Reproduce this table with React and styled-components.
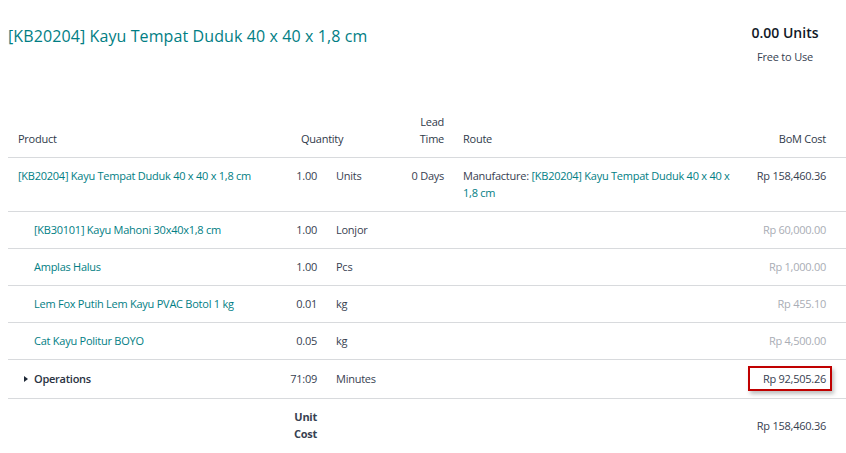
import React from 'react';
import styled, { createGlobalStyle } from 'styled-components';

const GlobalStyle = createGlobalStyle`
  body {
    margin: 0;
    background: #fff;
    font-family: "Open Sans", "Noto Sans", sans-serif;
    color: #374151;
  }
`;

const Page = styled.div`
  width: 846px;
  height: 453px;
  overflow: hidden;
  padding-left: 8px;
  box-sizing: border-box;
`;

const Header = styled.div`
  display: flex;
  justify-content: space-between;
  align-items: flex-start;
  padding-top: 22px;
  height: 103px;
  box-sizing: border-box;
`;

const Title = styled.h1`
  margin: 2px 0 0;
  font-size: 16px;
  letter-spacing: 0.1px;
  line-height: 24px;
  font-weight: 500;
  color: #017e84;
`;

const Stock = styled.div`
  width: 90px;
  margin-right: 16px;
  text-align: center;
`;

const StockValue = styled.div`
  font-size: 14px;
  font-weight: 600;
  line-height: 22px;
  color: #111827;
`;

const StockLabel = styled.div`
  margin-top: 4px;
  font-size: 11px;
  letter-spacing: -0.2px;
  line-height: 17px;
  color: #374151;
`;

const Table = styled.table`
  width: 838px;
  table-layout: fixed;
  border-collapse: collapse;
  font-size: 11px;
  letter-spacing: -0.25px;
  line-height: 17px;
`;

const Th = styled.th`
  font-weight: 500;
  text-align: ${p => p.$align || 'left'};
  vertical-align: bottom;
  padding: 10px ${p => p.$pr || 0}px 10px ${p => p.$pl || 0}px;
  border-bottom: 1px solid #d8dadd;
  color: #2f3a4a;
`;

const Td = styled.td`
  text-align: ${p => p.$align || 'left'};
  vertical-align: ${p => (p.$middle ? 'middle' : 'top')};
  padding: ${p => (p.$roomy ? '10px' : '9px')} ${p => p.$pr || 0}px
    ${p => (p.$roomy ? '11px' : '10px')} ${p => p.$pl || 0}px;
  border-bottom: ${p => (p.$last ? 'none' : '1px solid #d8dadd')};
  color: ${p => (p.$muted ? '#a9adb5' : '#374151')};
  font-weight: ${p => (p.$bold ? 700 : 400)};
`;

const Link = styled.span`
  color: #017e84;
`;

const OpsLabel = styled.span`
  font-weight: 600;
  color: #2a3342;
`;

const Caret = styled.span`
  display: inline-block;
  width: 0;
  height: 0;
  margin-right: 6px;
  vertical-align: 1px;
  border-top: 3.5px solid transparent;
  border-bottom: 3.5px solid transparent;
  border-left: 4px solid #1f2937;
`;

const Highlight = styled.span`
  position: relative;
  display: inline-block;
  &::after {
    content: '';
    position: absolute;
    left: -15px;
    right: -6px;
    top: -4px;
    bottom: -4px;
    border: 2px solid #c00000;
    box-shadow: 2px 3px 4px rgba(0, 0, 0, 0.25);
  }
`;

const components = [
  { name: '[KB30101] Kayu Mahoni 30x40x1,8 cm', qty: '1.00', uom: 'Lonjor', cost: 'Rp 60,000.00' },
  { name: 'Amplas Halus', qty: '1.00', uom: 'Pcs', cost: 'Rp 1,000.00' },
  { name: 'Lem Fox Putih Lem Kayu PVAC Botol 1 kg', qty: '0.01', uom: 'kg', cost: 'Rp 455.10' },
  { name: 'Cat Kayu Politur BOYO', qty: '0.05', uom: 'kg', cost: 'Rp 4,500.00' },
];

export default function App() {
  return (
    <Page>
      <GlobalStyle />
      <Header>
        <Title>[KB20204] Kayu Tempat Duduk 40 x 40 x 1,8 cm</Title>
        <Stock>
          <StockValue>0.00 Units</StockValue>
          <StockLabel>Free to Use</StockLabel>
        </Stock>
      </Header>
      <Table>
        <colgroup>
          <col style={{ width: 272 }} />
          <col style={{ width: 45 }} />
          <col style={{ width: 70 }} />
          <col style={{ width: 57 }} />
          <col style={{ width: 288 }} />
          <col style={{ width: 106 }} />
        </colgroup>
        <thead>
          <tr>
            <Th $pl={10}>Product</Th>
            <Th colSpan={2} $pl={21}>Quantity</Th>
            <Th $align="right" $pr={8}>Lead<br />Time</Th>
            <Th $pl={11}>Route</Th>
            <Th $align="right" $pr={20}>BoM Cost</Th>
          </tr>
        </thead>
        <tbody>
          <tr>
            <Td $pl={10}><Link>[KB20204] Kayu Tempat Duduk 40 x 40 x 1,8 cm</Link></Td>
            <Td $align="right" $pr={8}>1.00</Td>
            <Td $pl={11}>Units</Td>
            <Td $align="right" $pr={8}>0 Days</Td>
            <Td $pl={11} $pr={4}>Manufacture: <Link>[KB20204] Kayu Tempat Duduk 40 x 40 x 1,8 cm</Link></Td>
            <Td $align="right" $pr={20}>Rp 158,460.36</Td>
          </tr>
          {components.map(c => (
            <tr key={c.name}>
              <Td $pl={26}><Link>{c.name}</Link></Td>
              <Td $align="right" $pr={8}>{c.qty}</Td>
              <Td $pl={11}>{c.uom}</Td>
              <Td />
              <Td />
              <Td $align="right" $pr={20} $muted>{c.cost}</Td>
            </tr>
          ))}
          <tr>
            <Td $pl={16} $roomy>
              <OpsLabel><Caret />Operations</OpsLabel>
            </Td>
            <Td $align="right" $pr={8} $roomy>71:09</Td>
            <Td $pl={11} $roomy>Minutes</Td>
            <Td $roomy />
            <Td $roomy />
            <Td $align="right" $pr={20} $roomy>
              <Highlight>Rp 92,505.26</Highlight>
            </Td>
          </tr>
          <tr>
            <Td $last />
            <Td $last $align="right" $pr={8} $bold>Unit<br />Cost</Td>
            <Td $last />
            <Td $last />
            <Td $last />
            <Td $last $align="right" $pr={20} $middle>Rp 158,460.36</Td>
          </tr>
        </tbody>
      </Table>
    </Page>
  );
}
